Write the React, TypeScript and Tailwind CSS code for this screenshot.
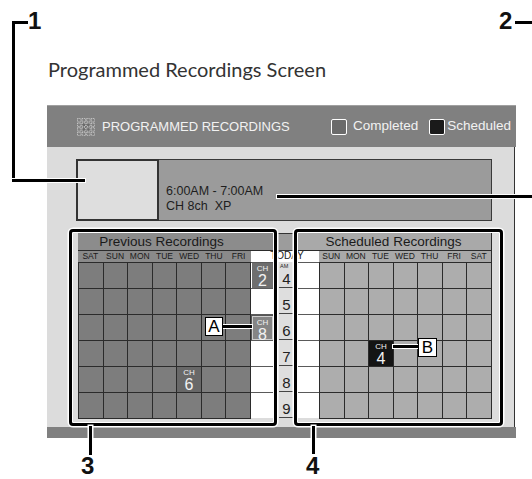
import React from "react";

const LEFT_DAYS = ["SAT", "SUN", "MON", "TUE", "WED", "THU", "FRI"];
const RIGHT_DAYS = ["SUN", "MON", "TUE", "WED", "THU", "FRI", "SAT"];
const HOURS = [4, 5, 6, 7, 8, 9];

const CALLOUT_FONT = { fontFamily: '"Liberation Sans Narrow", "Liberation Sans", Arial, sans-serif' };

function GridIcon() {
  const cells: React.ReactNode[] = [];
  for (let r = 0; r < 4; r++) {
    for (let c = 0; c < 4; c++) {
      cells.push(
        <rect
          key={`${r}-${c}`}
          x={c * 4.6 + 0.5}
          y={r * 4.6 + 0.5}
          width={3.4}
          height={3.4}
          fill="none"
          stroke="#d8d8d8"
          strokeWidth={0.8}
          strokeDasharray="1 0.8"
        />
      );
    }
  }
  return (
    <svg width="18" height="18" viewBox="0 0 18 18">
      <rect x="5" y="5" width="8" height="8" fill="#6a6a6a" />
      {cells}
    </svg>
  );
}

function ChBox({ n, className }: { n: number; className: string }) {
  return (
    <div className={`flex flex-col items-center pt-[2px] text-[#f2f2f2] ${className}`}>
      <span className="text-[8px] leading-[8px]">CH</span>
      <span className="text-[16px] leading-[14px] mt-[1px]">{n}</span>
    </div>
  );
}

export default function App() {
  return (
    <div
      className="relative w-[532px] h-[479px] overflow-hidden bg-white"
      style={{ fontFamily: '"Liberation Sans", Arial, sans-serif' }}
    >
      {/* page title */}
      <div className="h-[105px] pl-[48px] pt-[57px]">
        <div
          className="text-[20px] leading-[24px] text-[#333]"
          style={{ fontFamily: 'Lato, "Open Sans", sans-serif' }}
        >
          Programmed Recordings Screen
        </div>
      </div>

      {/* screen panel */}
      <div className="ml-[47px] w-[469px]">
        {/* header */}
        <div className="h-[42px] bg-[#808080] border-t border-[#a0a0a0] flex items-center pl-[30px] pr-[5px] text-[#f2f2f2]">
          <GridIcon />
          <span className="ml-[7px] text-[13px]">PROGRAMMED RECORDINGS</span>
          <div className="ml-auto flex items-center text-[13.5px]">
            <span className="w-[16px] h-[16px] rounded-[2px] border-[1.5px] border-white bg-[#6b6b6b]" />
            <span className="ml-[6px]">Completed</span>
            <span className="ml-[11px] w-[16px] h-[16px] rounded-[2px] border-[1.5px] border-white bg-[#1a1a1a]" />
            <span className="ml-[2px]">Scheduled</span>
          </div>
        </div>

        {/* body */}
        <div className="w-[468px] h-[280px] bg-[#dcdcdc] border-r border-[#333] pt-[12px]">
          {/* info row */}
          <div className="flex ml-[29px]">
            <div className="w-[83px] h-[62px] border-2 border-[#333] bg-[#dedede]" />
            <div className="w-[333px] h-[62px] bg-[#9b9b9b] border border-l-0 border-[#3a3a3a] pl-[7px] pt-[24px] text-[12.5px] leading-[15px] text-[#1e1e1e]">
              <div>6:00AM - 7:00AM</div>
              <div className="whitespace-pre">CH 8ch  XP</div>
            </div>
          </div>

          {/* schedule grid */}
          <div className="mt-[12px] ml-[31px] w-[414px]">
            {/* title row */}
            <div className="flex h-[18px] text-[13.5px] leading-[17px] text-[#1a1a1a]">
              <div className="w-[199px] bg-[#8c8c8c] border-b border-[#2b2b2b]">
                <div className="w-[167px] text-center">Previous Recordings</div>
              </div>
              <div className="w-[19px] bg-[#9c9c9c] border border-[#333]" />
              <div className="w-[196px] bg-[#a9a9a9] border-b border-r border-[#2b2b2b] text-center">
                Scheduled Recordings
              </div>
            </div>
            {/* day row */}
            <div className="flex h-[11px] text-[8.5px] leading-[11px] text-[#1a1a1a]">
              <div className="w-[173px] grid grid-cols-7 bg-[#8a8a8a]">
                {LEFT_DAYS.map((d) => (
                  <div key={d} className="text-center">{d}</div>
                ))}
              </div>
              <div className="w-[68px] bg-white text-center text-[10px] leading-[10px] pl-[4px]">TODAY</div>
              <div className="w-[173px] grid grid-cols-7 bg-[#a9a9a9] border-r border-[#2b2b2b]">
                {RIGHT_DAYS.map((d) => (
                  <div key={d} className="text-center">{d}</div>
                ))}
              </div>
            </div>
            {/* hour rows */}
            {HOURS.map((h, ri) => (
              <div key={h} className="flex h-[26px]">
                <div className="w-[173px] grid grid-cols-7 border-l border-[#2b2b2b]">
                  {LEFT_DAYS.map((d, ci) => (
                    <div
                      key={d}
                      className="bg-[#7d7d7d] border-r border-t border-[#2b2b2b]"
                    >
                      {ri === 4 && ci === 4 ? <ChBox n={6} className="h-full bg-[#686868]" /> : null}
                    </div>
                  ))}
                </div>
                <div className="w-[24px] bg-white border-t border-[#5a5a5a] pl-[1px] pr-[2px]">
                  {ri === 0 ? <ChBox n={2} className="h-full bg-[#6e6e6e]" /> : null}
                  {ri === 2 ? (
                    <ChBox n={8} className="h-[24px] mt-[1px] bg-[#858585] border border-[#cfcfcf] outline outline-1 outline-[#555]" />
                  ) : null}
                </div>
                <div className="w-[23px] bg-[#dedede] px-[4px]">
                  <div className="relative h-full border-b border-[#444] flex items-end justify-center text-[15px] leading-[15px] text-[#222]">
                    {ri === 0 ? (
                      <span className="absolute top-[1px] left-[1px] text-[5.5px] leading-[6px]">AM</span>
                    ) : null}
                    <span className="mb-[1px]">{h}</span>
                  </div>
                </div>
                <div className="w-[21px] bg-white border-t border-[#5a5a5a]" />
                <div className="w-[173px] grid grid-cols-7 border-l border-[#2b2b2b]">
                  {RIGHT_DAYS.map((d, ci) => (
                    <div
                      key={d}
                      className="bg-[#adadad] border-r border-t border-[#2b2b2b]"
                    >
                      {ri === 3 && ci === 2 ? <ChBox n={4} className="h-full bg-[#141414]" /> : null}
                    </div>
                  ))}
                </div>
              </div>
            ))}
            <div className="flex h-px">
              <div className="w-[173px] bg-[#2b2b2b]" />
              <div className="w-[68px]" />
              <div className="w-[173px] bg-[#2b2b2b]" />
            </div>
          </div>
        </div>

        {/* bottom bar */}
        <div className="h-[11px] bg-[#808080]" />
      </div>

      {/* ===== annotation overlays ===== */}
      {/* callout frames */}
      <div className="absolute left-[69px] top-[229px] w-[208px] h-[197px] border-[3px] border-black rounded-[4px] shadow-[0_0_0_1.5px_#fff,inset_0_0_0_1px_#fff]" />
      <div className="absolute left-[294px] top-[229px] w-[209px] h-[197px] border-[3px] border-black rounded-[4px] shadow-[0_0_0_1.5px_#fff,inset_0_0_0_1px_#fff]" />

      {/* callout 1 */}
      <div className="absolute left-[12px] top-[21px] w-[3px] h-[161px] bg-black" />
      <div className="absolute left-[12px] top-[21px] w-[16px] h-[3px] bg-black" />
      <div className="absolute left-[12px] top-[179px] w-[73px] h-[3px] bg-black shadow-[0_0_0_1px_#fff]" />
      <div className="absolute left-[28px] top-[9px] text-[24px] leading-[24px] font-bold text-[#111]" style={CALLOUT_FONT}>1</div>

      {/* callout 2 */}
      <div className="absolute left-[499px] top-[9px] text-[24px] leading-[24px] font-bold text-[#111]" style={CALLOUT_FONT}>2</div>
      <div className="absolute left-[515px] top-[21px] w-[17px] h-[3px] bg-black" />
      <div className="absolute left-[277px] top-[195px] w-[255px] h-[3px] bg-black shadow-[0_0_0_1px_#fff]" />

      {/* callout 3 */}
      <div className="absolute left-[89px] top-[426px] w-[3px] h-[29px] bg-black shadow-[0_0_0_1.5px_#fff]" />
      <div className="absolute left-[81px] top-[454px] text-[24px] leading-[24px] font-bold text-[#111]" style={CALLOUT_FONT}>3</div>

      {/* callout 4 */}
      <div className="absolute left-[312px] top-[426px] w-[3px] h-[28px] bg-black shadow-[0_0_0_1.5px_#fff]" />
      <div className="absolute left-[306px] top-[454px] text-[24px] leading-[24px] font-bold text-[#111]" style={CALLOUT_FONT}>4</div>

      {/* A marker */}
      <div className="absolute left-[223px] top-[325px] w-[29px] h-[3px] bg-black shadow-[0_0_0_1px_#fff]" />
      <div className="absolute left-[205px] top-[317px] w-[18px] h-[19px] bg-white border-[1.5px] border-black flex items-center justify-center text-[17px] leading-[17px] text-black">A</div>

      {/* B marker */}
      <div className="absolute left-[393px] top-[345px] w-[25px] h-[3px] bg-black shadow-[0_0_0_1px_#fff]" />
      <div className="absolute left-[418px] top-[338px] w-[19px] h-[19px] bg-white border-[1.5px] border-black flex items-center justify-center text-[17px] leading-[17px] text-black">B</div>
    </div>
  );
}
